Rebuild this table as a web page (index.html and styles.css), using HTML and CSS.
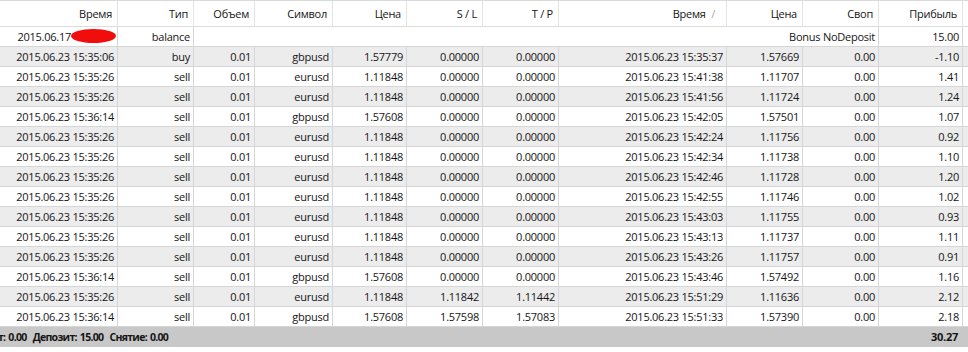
FILE: index.html
```html
<!DOCTYPE html>
<html>
<head>
<meta charset="utf-8">
<link rel="stylesheet" href="styles.css">
</head>
<body>
<div class="grid">
  <div class="row head">
    <div class="c">Время</div><div class="c">Тип</div><div class="c">Объем</div><div class="c">Символ</div><div class="c">Цена</div><div class="c">S / L</div><div class="c">T / P</div><div class="c sorted">Время<span class="sort">/</span></div><div class="c">Цена</div><div class="c">Своп</div><div class="c">Прибыль</div><div class="c end"></div>
  </div>
  <div class="row">
    <div class="c">2015.06.17<span class="redact"></span></div><div class="c">balance</div><div class="c span">Bonus NoDeposit</div><div class="c">15.00</div><div class="c end"></div>
  </div>
  <div class="row alt"><div class="c">2015.06.23 15:35:06</div><div class="c">buy</div><div class="c">0.01</div><div class="c">gbpusd</div><div class="c">1.57779</div><div class="c">0.00000</div><div class="c">0.00000</div><div class="c">2015.06.23 15:35:37</div><div class="c">1.57669</div><div class="c">0.00</div><div class="c">-1.10</div><div class="c end"></div></div>
  <div class="row"><div class="c">2015.06.23 15:35:26</div><div class="c">sell</div><div class="c">0.01</div><div class="c">eurusd</div><div class="c">1.11848</div><div class="c">0.00000</div><div class="c">0.00000</div><div class="c">2015.06.23 15:41:38</div><div class="c">1.11707</div><div class="c">0.00</div><div class="c">1.41</div><div class="c end"></div></div>
  <div class="row alt"><div class="c">2015.06.23 15:35:26</div><div class="c">sell</div><div class="c">0.01</div><div class="c">eurusd</div><div class="c">1.11848</div><div class="c">0.00000</div><div class="c">0.00000</div><div class="c">2015.06.23 15:41:56</div><div class="c">1.11724</div><div class="c">0.00</div><div class="c">1.24</div><div class="c end"></div></div>
  <div class="row"><div class="c">2015.06.23 15:36:14</div><div class="c">sell</div><div class="c">0.01</div><div class="c">gbpusd</div><div class="c">1.57608</div><div class="c">0.00000</div><div class="c">0.00000</div><div class="c">2015.06.23 15:42:05</div><div class="c">1.57501</div><div class="c">0.00</div><div class="c">1.07</div><div class="c end"></div></div>
  <div class="row alt"><div class="c">2015.06.23 15:35:26</div><div class="c">sell</div><div class="c">0.01</div><div class="c">eurusd</div><div class="c">1.11848</div><div class="c">0.00000</div><div class="c">0.00000</div><div class="c">2015.06.23 15:42:24</div><div class="c">1.11756</div><div class="c">0.00</div><div class="c">0.92</div><div class="c end"></div></div>
  <div class="row"><div class="c">2015.06.23 15:35:26</div><div class="c">sell</div><div class="c">0.01</div><div class="c">eurusd</div><div class="c">1.11848</div><div class="c">0.00000</div><div class="c">0.00000</div><div class="c">2015.06.23 15:42:34</div><div class="c">1.11738</div><div class="c">0.00</div><div class="c">1.10</div><div class="c end"></div></div>
  <div class="row alt"><div class="c">2015.06.23 15:35:26</div><div class="c">sell</div><div class="c">0.01</div><div class="c">eurusd</div><div class="c">1.11848</div><div class="c">0.00000</div><div class="c">0.00000</div><div class="c">2015.06.23 15:42:46</div><div class="c">1.11728</div><div class="c">0.00</div><div class="c">1.20</div><div class="c end"></div></div>
  <div class="row"><div class="c">2015.06.23 15:35:26</div><div class="c">sell</div><div class="c">0.01</div><div class="c">eurusd</div><div class="c">1.11848</div><div class="c">0.00000</div><div class="c">0.00000</div><div class="c">2015.06.23 15:42:55</div><div class="c">1.11746</div><div class="c">0.00</div><div class="c">1.02</div><div class="c end"></div></div>
  <div class="row alt"><div class="c">2015.06.23 15:35:26</div><div class="c">sell</div><div class="c">0.01</div><div class="c">eurusd</div><div class="c">1.11848</div><div class="c">0.00000</div><div class="c">0.00000</div><div class="c">2015.06.23 15:43:03</div><div class="c">1.11755</div><div class="c">0.00</div><div class="c">0.93</div><div class="c end"></div></div>
  <div class="row"><div class="c">2015.06.23 15:35:26</div><div class="c">sell</div><div class="c">0.01</div><div class="c">eurusd</div><div class="c">1.11848</div><div class="c">0.00000</div><div class="c">0.00000</div><div class="c">2015.06.23 15:43:13</div><div class="c">1.11737</div><div class="c">0.00</div><div class="c">1.11</div><div class="c end"></div></div>
  <div class="row alt"><div class="c">2015.06.23 15:35:26</div><div class="c">sell</div><div class="c">0.01</div><div class="c">eurusd</div><div class="c">1.11848</div><div class="c">0.00000</div><div class="c">0.00000</div><div class="c">2015.06.23 15:43:26</div><div class="c">1.11757</div><div class="c">0.00</div><div class="c">0.91</div><div class="c end"></div></div>
  <div class="row"><div class="c">2015.06.23 15:36:14</div><div class="c">sell</div><div class="c">0.01</div><div class="c">gbpusd</div><div class="c">1.57608</div><div class="c">0.00000</div><div class="c">0.00000</div><div class="c">2015.06.23 15:43:46</div><div class="c">1.57492</div><div class="c">0.00</div><div class="c">1.16</div><div class="c end"></div></div>
  <div class="row alt"><div class="c">2015.06.23 15:35:26</div><div class="c">sell</div><div class="c">0.01</div><div class="c">eurusd</div><div class="c">1.11848</div><div class="c">1.11842</div><div class="c">1.11442</div><div class="c">2015.06.23 15:51:29</div><div class="c">1.11636</div><div class="c">0.00</div><div class="c">2.12</div><div class="c end"></div></div>
  <div class="row"><div class="c">2015.06.23 15:36:14</div><div class="c">sell</div><div class="c">0.01</div><div class="c">gbpusd</div><div class="c">1.57608</div><div class="c">1.57598</div><div class="c">1.57083</div><div class="c">2015.06.23 15:51:33</div><div class="c">1.57390</div><div class="c">0.00</div><div class="c">2.18</div><div class="c end"></div></div>
  <div class="row foot">
    <div class="summary"><span class="cut">Кредит: 0.00</span>&nbsp; Депозит: 15.00&nbsp; Снятие: 0.00</div>
    <div class="total">30.27</div>
    <div class="end"></div>
  </div>
</div>
</body>
</html>
```
FILE: styles.css
```css
html, body {
  margin: 0;
  padding: 0;
  background: #ffffff;
}
body {
  font-family: "Open Sans", "Noto Sans", sans-serif;
  font-size: 11px;
  letter-spacing: -0.25px;
  color: #151515;
  width: 968px;
  height: 352px;
  overflow: hidden;
}
.grid {
  display: flex;
  flex-direction: column;
}
.row {
  display: grid;
  grid-template-columns: 118px 76px 61px 78px 74px 76px 76px 168px 76px 76px 84px 5px;
  height: 20px;
  box-sizing: border-box;
  border-bottom: 1px solid #d6d6d6;
  background: #ffffff;
}
.row.alt {
  background: #ececec;
}
.c {
  box-sizing: border-box;
  border-right: 1px solid #d6d6d6;
  text-align: right;
  padding-right: 3px;
  line-height: 19px;
  white-space: nowrap;
  overflow: visible;
}
.c.end {
  border-right: none;
  padding: 0;
}
.c.span {
  grid-column: 3 / 11;
}
.head {
  height: 27px;
  border-top: 1px solid #d9d9d9;
  border-bottom: 1px solid #dcdcdc;
}
.head .c {
  line-height: 25px;
  padding-right: 5px;
  border-right-color: #e3e3e3;
}
.sort {
  color: #a0a0a0;
  margin-left: 6px;
  margin-right: 6px;
  font-size: 10px;
}
.redact {
  display: inline-block;
  width: 45px;
  height: 14px;
  background: #f20d0d;
  border-radius: 50%;
  vertical-align: -2px;
  margin-right: -2px;
}
.foot {
  grid-template-columns: 879px 84px 5px;
  background: #c8c8c8;
  border-bottom: none;
  font-weight: bold;
  line-height: 20px;
}
.summary {
  overflow: hidden;
  white-space: nowrap;
  font-size: 10.5px;
  letter-spacing: -0.7px;
  word-spacing: 1px;
}
.cut {
  margin-left: -33px;
}
.total {
  text-align: right;
  padding-right: 5px;
}
```
